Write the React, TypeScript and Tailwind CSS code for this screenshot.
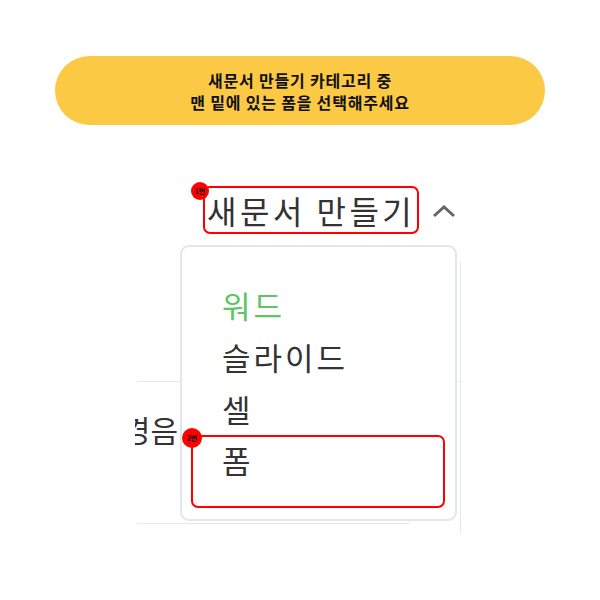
const kr = { fontFamily: '"Noto Sans CJK KR", "Noto Sans", sans-serif' };

const Badge = ({ label, className }: { label: string; className: string }) => (
  <span
    className={`absolute flex items-center justify-center rounded-full bg-[#ff0000] text-[7px] font-bold leading-none text-black ${className}`}
  >
    {label}
  </span>
);

const App = () => {
  const items = ["슬라이드", "셀"];

  return (
    <div className="relative h-[600px] w-[600px] overflow-hidden bg-white" style={kr}>
      {/* 안내 말풍선 */}
      <div className="mx-[55px] mt-[56px] flex h-[69px] flex-col items-center justify-center rounded-full bg-[#fcc945] text-[16px] font-bold leading-[22px] tracking-[0.8px] text-[#111]">
        <p>새문서 만들기 카테고리 중</p>
        <p>맨 밑에 있는 폼을 선택해주세요</p>
      </div>

      {/* 새문서 만들기 헤더 */}
      <div className="ml-[203px] mt-[61px] flex items-center">
        <div className="relative flex h-[48px] w-[216px] items-center rounded-[7px] border-2 border-[#ff0000] pl-[2px]">
          <Badge label="1번" className="-left-[14px] -top-[6px] h-[18px] w-[18px]" />
          <span className="whitespace-nowrap text-[32px] leading-none tracking-[3.5px] text-[#333]">새문서 만들기</span>
        </div>
        <svg width="24" height="16" viewBox="0 0 24 16" className="ml-[13px] mt-[2px]">
          <polyline points="2,13 12,4 22,13" fill="none" stroke="#666" strokeWidth="3" />
        </svg>
      </div>

      {/* 뒤쪽 목록 */}
      <div className="relative pt-[28px]">
        <div className="ml-[137px] flex w-[324px] flex-col">
          <div className="h-[119px] border-r border-[#e6e8eb]" />
          <div className="flex h-[142px] items-start border-r border-t border-[#e6e8eb]">
            <div className="-ml-[2px] mt-[29px] flex w-[43px] justify-end overflow-hidden">
              <span className="whitespace-nowrap text-[30px] leading-[36px] text-[#333]">경음</span>
            </div>
          </div>
          <div className="h-[10px] w-[273px] border-t border-[#e6e8eb]" />
          <div className="-mt-[10px] h-[10px] border-r border-[#e6e8eb]" />
        </div>

        {/* 드롭다운 */}
        <div className="absolute left-[180px] top-[11px] h-[276px] w-[277px] rounded-[9px] border-2 border-[#e3e6ea] bg-white pt-[32px]">
          <div className="h-[52px] pl-[40px] text-[31px] leading-[52px] tracking-[3px] text-[#5ec466]">워드</div>
          {items.map((item) => (
            <div key={item} className="h-[52px] pl-[40px] text-[31px] leading-[52px] tracking-[3px] text-[#333]">
              {item}
            </div>
          ))}
          <div className="relative ml-[9px] h-[73px] w-[254px] rounded-[7px] border-2 border-[#ff0000] pl-[29px] pt-[3px]">
            <Badge label="2번" className="-left-[11px] -top-[9px] h-[20px] w-[20px]" />
            <span className="text-[31px] leading-[40px] text-[#333]">폼</span>
          </div>
        </div>
      </div>
    </div>
  );
};

export default App;
